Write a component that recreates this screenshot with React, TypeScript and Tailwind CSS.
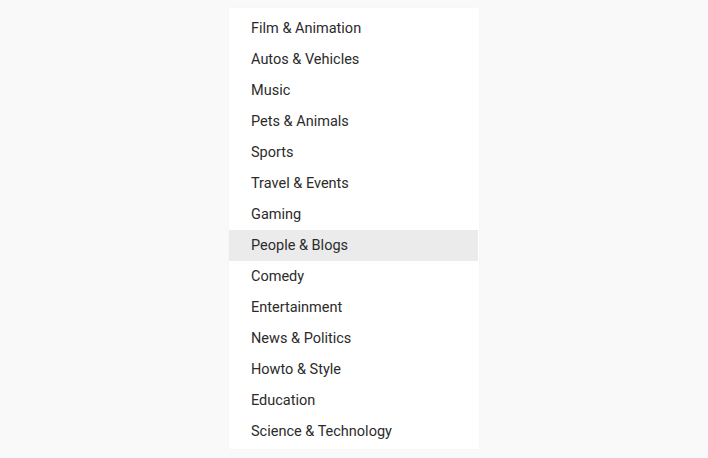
import React from "react";

const items = [
  "Film & Animation",
  "Autos & Vehicles",
  "Music",
  "Pets & Animals",
  "Sports",
  "Travel & Events",
  "Gaming",
  "People & Blogs",
  "Comedy",
  "Entertainment",
  "News & Politics",
  "Howto & Style",
  "Education",
  "Science & Technology",
];

export default function App() {
  return (
    <div className="w-[708px] h-[458px] bg-[#f9f9f9] pt-[8px] pl-[229px]" style={{ fontFamily: "Roboto, 'Noto Sans', sans-serif" }}>
      <ul className="w-[250px] bg-white pt-[5px] pb-[2px] shadow-[0_0_2px_rgba(0,0,0,0.03)]">
        {items.map((it, i) => (
          <li
            key={it}
            className={`h-[31px] flex items-center pl-[22px] pt-[1px] text-[14.5px] text-[#2b2b2b] ${i === 7 ? "bg-[#ebebeb] mr-[1px]" : ""}`}
          >
            {it}
          </li>
        ))}
      </ul>
    </div>
  );
}
